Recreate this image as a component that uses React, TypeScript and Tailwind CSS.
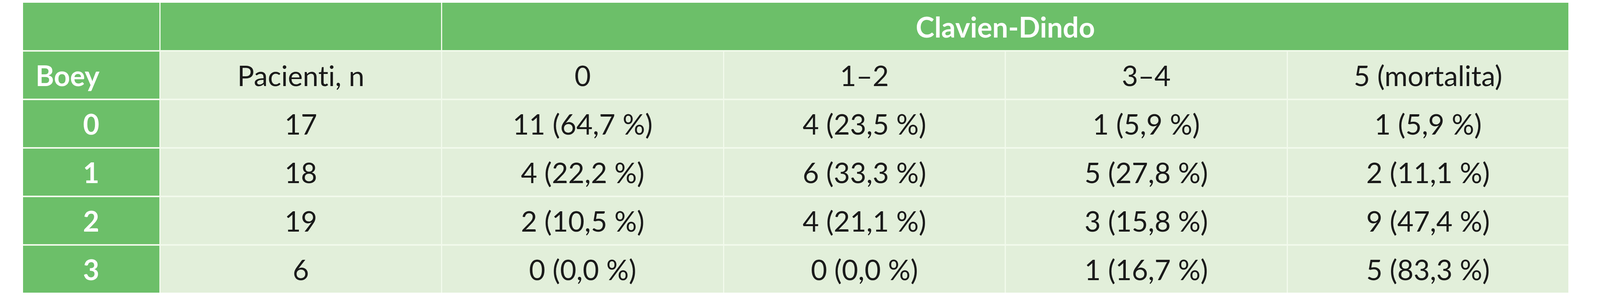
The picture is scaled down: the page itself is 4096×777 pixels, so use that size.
const columns = ['0', '1–2', '3–4', '5 (mortalita)']

const rows = [
  { boey: '0', n: '17', values: ['11 (64,7 %)', '4 (23,5 %)', '1 (5,9 %)', '1 (5,9 %)'] },
  { boey: '1', n: '18', values: ['4 (22,2 %)', '6 (33,3 %)', '5 (27,8 %)', '2 (11,1 %)'] },
  { boey: '2', n: '19', values: ['2 (10,5 %)', '4 (21,1 %)', '3 (15,8 %)', '9 (47,4 %)'] },
  { boey: '3', n: '6', values: ['0 (0,0 %)', '0 (0,0 %)', '1 (16,7 %)', '5 (83,3 %)'] },
]

function GreenCell({ children, left }: { children?: React.ReactNode; left?: boolean }) {
  return (
    <div
      className={`flex items-center bg-[#6cbf69] font-bold text-white ${left ? 'justify-start pl-[32px]' : 'justify-center'}`}
    >
      {children}
    </div>
  )
}

function LightCell({ children }: { children?: React.ReactNode }) {
  return <div className="flex items-center justify-center bg-[#e2efda] text-[#1a1a1a]">{children}</div>
}

export default function App() {
  return (
    <div className="h-[777px] w-[4096px] bg-white pl-[59px] pt-[7px] font-['Lato',sans-serif] text-[72px] leading-none [font-variant-ligatures:none]">
      <div className="grid w-[3956px] grid-cols-[349px_repeat(5,1fr)] grid-rows-[121px_repeat(5,120px)] gap-x-[3px] gap-y-[4px] bg-[#f2faec]">
        {/* header */}
        <GreenCell />
        <GreenCell />
        <div className="col-span-4 flex items-center justify-center bg-[#6cbf69] font-bold text-white">
          Clavien-Dindo
        </div>

        {/* sub header */}
        <GreenCell left>Boey</GreenCell>
        <LightCell>Pacienti, n</LightCell>
        {columns.map((c) => (
          <LightCell key={c}>{c}</LightCell>
        ))}

        {rows.map((r) => (
          <div key={r.boey} className="contents">
            <GreenCell>{r.boey}</GreenCell>
            <LightCell>{r.n}</LightCell>
            {r.values.map((v, i) => (
              <LightCell key={i}>{v}</LightCell>
            ))}
          </div>
        ))}
      </div>
    </div>
  )
}
